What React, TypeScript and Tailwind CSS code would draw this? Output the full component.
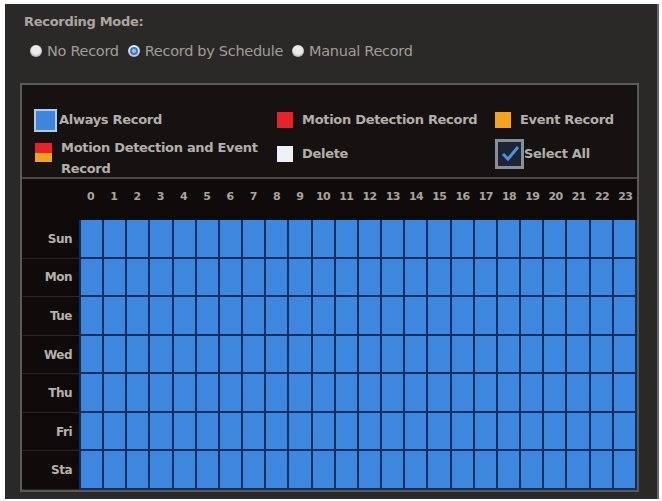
import { useState } from "react"

const hours = Array.from({ length: 24 }, (_, i) => i)
const days = ["Sun", "Mon", "Tue", "Wed", "Thu", "Fri", "Sta"]

function Radio({ checked }: { checked?: boolean }) {
  return (
    <span className="relative inline-block w-[12px] h-[12px] rounded-full bg-[#ececec] shadow-[inset_0_-1px_2px_rgba(0,0,0,0.35)]">
      {checked && (
        <span className="absolute inset-[2px] rounded-full border-[2px] border-[#3b78c4] bg-[#9fc3ea]" />
      )}
    </span>
  )
}

export default function App() {
  const [mode, setMode] = useState("schedule")
  const modes = [
    { id: "none", label: "No Record" },
    { id: "schedule", label: "Record by Schedule" },
    { id: "manual", label: "Manual Record" },
  ]

  return (
    <div
      className="w-[662px] h-[501px] bg-white pl-[5px] pt-[4px] pr-[3px] pb-[2px]"
      style={{ fontFamily: '"DejaVu Sans", Verdana, sans-serif' }}
    >
      <div className="h-full bg-[#2b2927] border-r-2 border-[#6a6866] pl-[15px] pr-[18px] pt-[10px] pb-[7px] flex flex-col">
        {/* Recording mode */}
        <div className="text-[13px] font-bold text-[#aaa6a1] tracking-[-0.3px] leading-4 pl-[4px]">
          Recording Mode:
        </div>
        <div className="flex items-center mt-[13px] pl-[10px] text-[14.5px] text-[#a19d98] tracking-[-0.3px] leading-4">
          {modes.map((m) => (
            <label
              key={m.id}
              className="flex items-center gap-[5px] mr-[9px] cursor-pointer"
              onClick={() => setMode(m.id)}
            >
              <Radio checked={mode === m.id} />
              {m.label}
            </label>
          ))}
        </div>

        {/* Schedule panel */}
        <div className="mt-[24px] flex-1 border-2 border-[#5c5a58] bg-[#151211] flex flex-col">
          {/* Legend */}
          <div className="h-[94px] border-b-2 border-[#4a4846] pl-[12px] pt-[23px] text-[13px] font-bold text-[#b3afaa] tracking-[-0.3px] leading-[22px]">
            <div className="flex items-center h-[24px]">
              <div className="w-[243px] flex items-center">
                <span className="w-[23px] h-[23px] bg-[#3d86dd] border-2 border-[#b8c9de]" />
                <span className="ml-[2px]">Always Record</span>
              </div>
              <div className="w-[218px] flex items-center">
                <span className="w-[16px] h-[16px] bg-[#e8222a]" />
                <span className="ml-[9px]">Motion Detection Record</span>
              </div>
              <div className="flex items-center">
                <span className="w-[16px] h-[16px] bg-[#f5a21c]" />
                <span className="ml-[9px]">Event Record</span>
              </div>
            </div>
            <div className="flex items-start mt-[5px]">
              <div className="w-[243px] flex items-start">
                <span className="mt-[6px] ml-[1px] w-[17px] h-[19px] flex flex-col">
                  <span className="flex-1 bg-[#e8222a]" />
                  <span className="flex-1 bg-[#f5a21c]" />
                </span>
                <span className="ml-[9px] leading-[21px]">
                  Motion Detection and Event
                  <br />
                  Record
                </span>
              </div>
              <div className="w-[218px] flex items-center h-[24px] mt-[5px]">
                <span className="w-[16px] h-[16px] bg-[#eef2f8]" />
                <span className="ml-[9px]">Delete</span>
              </div>
              <div className="flex items-center mt-[2px]">
                <span className="w-[29px] h-[30px] border-[3px] border-[#8a8e96] bg-[#1b2535] flex items-center justify-center">
                  <svg viewBox="0 0 20 20" className="w-[20px] h-[20px]">
                    <path d="M3 10 L8 15 L18 3" fill="none" stroke="#4f8fe0" strokeWidth="3" />
                  </svg>
                </span>
                <span>Select All</span>
              </div>
            </div>
          </div>

          {/* Hour grid */}
          <div className="flex-1 flex flex-col bg-[#0e0b0a]">
            <div className="flex h-[41px] items-center">
              <div className="w-[57px]" />
              <div className="flex-1 grid grid-cols-24 text-[11px] font-bold text-[#a8a4a0] tracking-[-0.5px] pb-[4px]">
                {hours.map((h) => (
                  <span key={h} className="text-center">
                    {h}
                  </span>
                ))}
              </div>
            </div>
            <div className="flex-1 flex flex-col">
              {days.map((d) => (
                <div key={d} className="flex flex-1">
                  <div className="w-[57px] pr-[7px] flex items-center justify-end text-[12px] font-bold text-[#b6b2ad] tracking-[-0.5px] border-b border-[#2a2624]">
                    {d}
                  </div>
                  <div className="flex-1 grid grid-cols-24 bg-[#3c86dd] border-l-2 border-[#0f2d5c]">
                    {hours.map((h) => (
                      <span
                        key={h}
                        className="border-r-2 border-b-2 border-[#11305f] bg-[#3d87df]"
                      />
                    ))}
                  </div>
                </div>
              ))}
            </div>
          </div>
        </div>
      </div>
    </div>
  )
}
